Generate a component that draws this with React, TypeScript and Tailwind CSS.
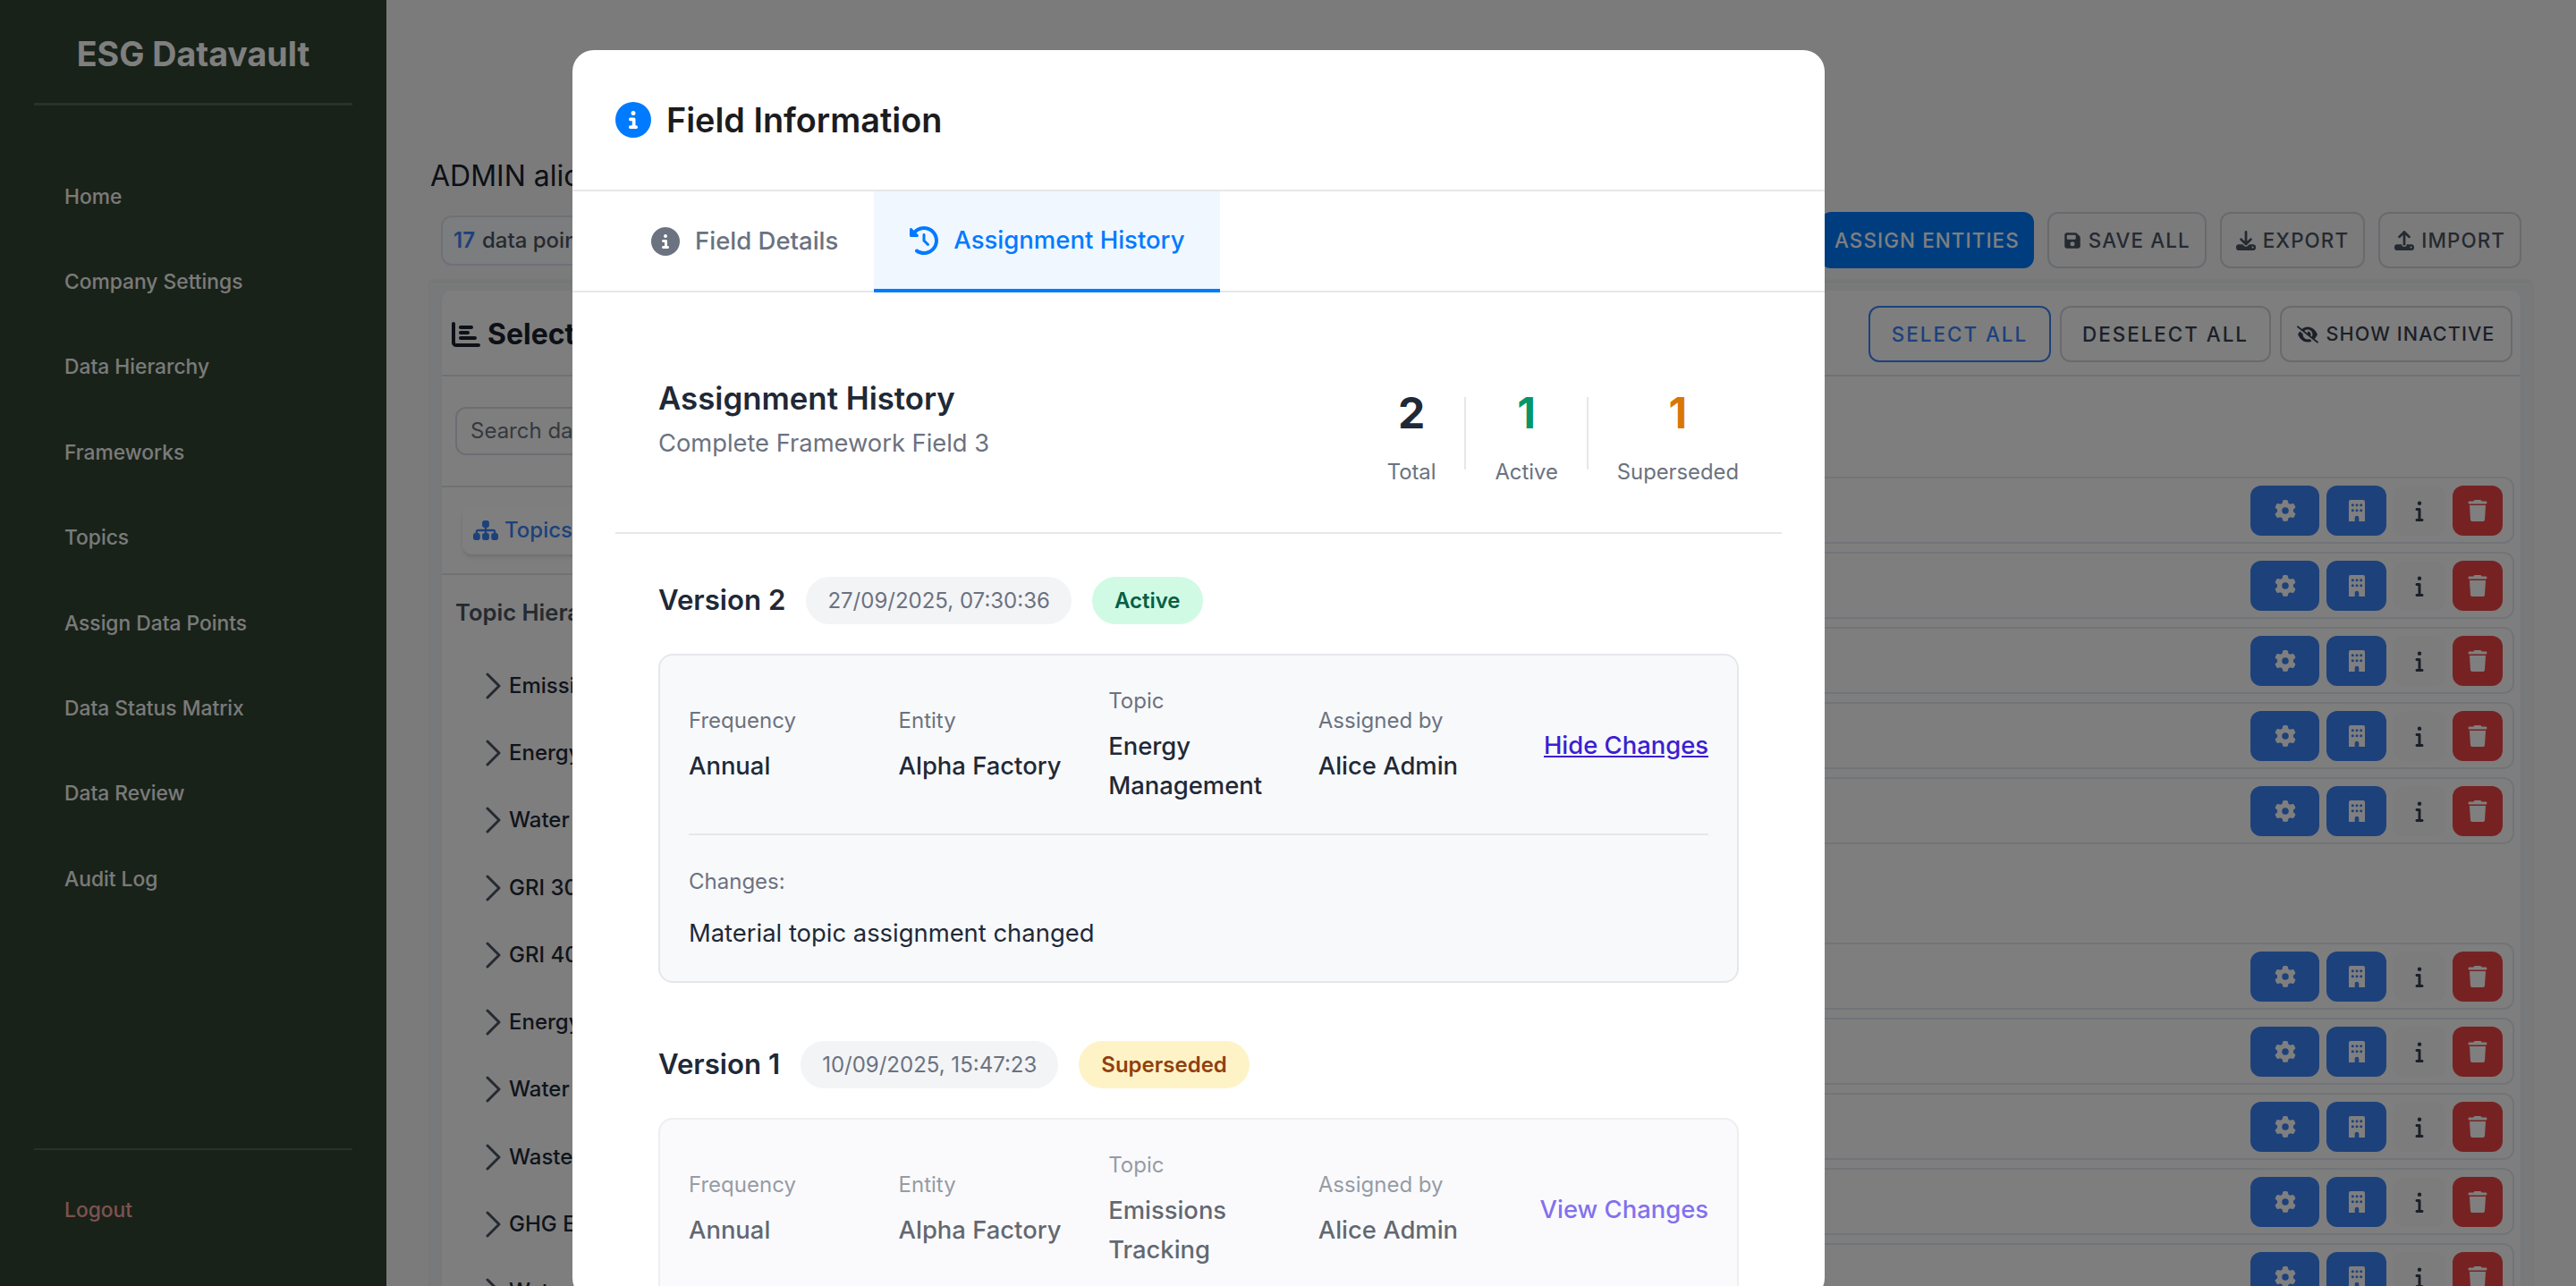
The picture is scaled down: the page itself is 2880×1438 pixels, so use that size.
import { FaChartBar, FaCircleInfo, FaClockRotateLeft, FaDownload, FaEyeSlash, FaFloppyDisk, FaGear, FaInfo, FaSitemap, FaTrash, FaUpload } from 'react-icons/fa6';

const navItems = ['Home', 'Company Settings', 'Data Hierarchy', 'Frameworks', 'Topics', 'Assign Data Points', 'Data Status Matrix', 'Data Review', 'Audit Log'];
const topics = ['Emissions Tracking', 'Energy Management', 'Water Management', 'GRI 300 Environmental', 'GRI 400 Social', 'Energy Management', 'Water Management', 'Waste Management', 'GHG Emissions', 'Water Management'];

function Sidebar() {
  return (
    <aside className="flex h-full w-[432px] shrink-0 flex-col bg-[#304431] px-[38px]">
      <div className="flex h-[118px] items-center justify-center border-b-[3px] border-[#4f6653] pt-[8px] text-[37.6px] font-bold text-white">ESG Datavault</div>
      <nav className="flex flex-1 flex-col pt-[54px]">
        {navItems.map(item => (
          <a key={item} className="flex h-[95.4px] items-center pl-[34px] text-[22.8px] font-medium text-[#f5f5f5]">{item}</a>
        ))}
      </nav>
      <div className="flex h-[154px] items-start border-t-2 border-[#4f6653] pl-[34px] pt-[50px] text-[22.8px] font-medium text-[#f8a5a0]">Logout</div>
    </aside>
  );
}

function ToolButton({ icon, label }: { icon: React.ReactNode; label: string }) {
  return (
    <button className="flex h-[63px] items-center gap-[8px] rounded-[12px] border-2 border-[#d1d5db] px-[16px] text-[22.4px] font-medium tracking-[1.1px] text-[#4b5563]">
      {icon}
      {label}
    </button>
  );
}

function BuildingIcon() {
  return (
    <svg width="18" height="24" viewBox="0 0 18 24">
      <path fill="#ffffff" d="M2 0h14a2 2 0 0 1 2 2v22h-6.7v-4a2.3 2.3 0 0 0-4.6 0v4H0V2a2 2 0 0 1 2-2z" />
      {[4.3, 9, 13.7].map(x => [5.7, 11.7].map(y => (
        <circle key={`${x}-${y}`} cx={x} cy={y} r="1.5" fill="#3b82f6" />
      )))}
    </svg>
  );
}

function RowActions() {
  return (
    <div className="ml-auto flex items-center gap-[8px]">
      <button className="flex h-[56px] w-[77px] items-center justify-center rounded-[12px] bg-[#3b82f6] text-white"><FaGear className="size-[24px]" /></button>
      <button className="flex h-[56px] w-[67px] items-center justify-center rounded-[12px] bg-[#3b82f6] text-white"><BuildingIcon /></button>
      <button className="flex h-[56px] w-[58px] items-center justify-center rounded-[12px] bg-[#f8f9fa] text-[#374151]"><FaInfo className="size-[24px]" /></button>
      <button className="flex h-[56px] w-[56px] items-center justify-center rounded-[12px] bg-[#ef4444] text-white"><FaTrash className="size-[24px]" /></button>
    </div>
  );
}

function FieldRow() {
  return (
    <div className="flex h-[75px] items-center rounded-[12px] border-2 border-[#e2e8f0] pr-[11px]">
      <RowActions />
    </div>
  );
}

function MainPage() {
  return (
    <main className="min-w-0 flex-1 bg-[#f6f7f8] pl-[49px] pr-[49px] pt-[173px]">
      <div className="text-[32px] leading-[48px] text-[#1a202c]">ADMIN alice@alpha.com</div>
      <div className="mt-[16px] flex h-[63px] items-center justify-between pl-[12px] pr-[12px]">
        <div className="flex h-[56px] items-center rounded-[12px] border-2 border-[#dbe3ee] bg-[#f8fafc] px-[12px] text-[24px] font-medium text-[#4b5563]">
          <span className="mr-[8px] font-semibold text-[#3b82f6]">17</span> data points selected
        </div>
        <div className="flex items-center gap-[15px]">
          <button className="flex h-[63px] items-center rounded-[12px] bg-[#007aff] px-[16px] text-[22.4px] font-medium tracking-[1.1px] text-white">ASSIGN ENTITIES</button>
          <ToolButton icon={<FaFloppyDisk className="size-[20px]" />} label="SAVE ALL" />
          <ToolButton icon={<FaDownload className="size-[22px]" />} label="EXPORT" />
          <ToolButton icon={<FaUpload className="size-[22px]" />} label="IMPORT" />
        </div>
      </div>
      <div className="mt-[16px] bg-[#f1f2f4] px-[11px] pt-[9px] shadow-[0_-2px_4px_rgba(0,0,0,0.08)]">
        <div className="rounded-t-[12px] border-x-2 border-[#eef1f5] bg-[#fdfdfd]">
          <div className="flex h-[96px] items-center justify-between border-b-2 border-[#dfe3e9] pl-[11px] pr-[9px] pt-[3px]">
            <div className="flex items-center gap-[8px] text-[32px] font-bold text-[#1a202c]">
              <FaChartBar className="size-[32px]" />
              Select Data Points
            </div>
            <div className="flex items-center gap-[10px]">
              <button className="flex h-[63px] w-[204px] items-center justify-center rounded-[12px] border-2 border-[#3b82f6] text-[22.4px] font-medium tracking-[2px] text-[#3b82f6]">SELECT ALL</button>
              <button className="flex h-[63px] w-[236px] items-center justify-center rounded-[12px] border-2 border-[#d1d5db] text-[22.4px] font-medium tracking-[2px] text-[#374151]">DESELECT ALL</button>
              <button className="flex h-[63px] w-[260px] items-center justify-center gap-[8px] rounded-[12px] border-2 border-[#d1d5db] text-[21.6px] font-medium tracking-[1.1px] text-[#374151]"><FaEyeSlash className="size-[24px]" />SHOW INACTIVE</button>
            </div>
          </div>
          <div className="flex">
            <div className="w-[760px] shrink-0">
              <div className="border-b-2 border-[#dfe3e9] px-[15px] py-[34px]">
                <div className="flex h-[54px] items-center rounded-[12px] border-2 border-[#d8dde5] px-[15px] text-[24px] text-[#6b7280]">Search data points...</div>
              </div>
              <div className="border-b-2 border-[#dfe3e9] px-[23px] py-[21px]">
                <div className="flex h-[54px] w-fit items-center gap-[7px] rounded-[10px] bg-white px-[12px] text-[24px] font-medium text-[#3b82f6] shadow-md"><FaSitemap className="size-[28px]" />Topics</div>
              </div>
              <div className="pl-[15px] pt-[22px] text-[25.6px] font-semibold leading-[40px] text-[#4b5563]">Topic Hierarchy</div>
              <div className="pl-[49px] pt-[24px]">
                {topics.map((topic, i) => (
                  <div key={i} className="flex h-[75.3px] items-center gap-[8px] text-[24px] font-medium text-[#1f2937]">
                    <svg width="18" height="30" viewBox="0 0 18 30" fill="none" stroke="#4b5563" strokeWidth="3" strokeLinecap="round" strokeLinejoin="round"><path d="M2 2 L15 15 L2 28" /></svg>
                    {topic}
                  </div>
                ))}
              </div>
            </div>
            <div className="min-w-0 flex-1 pr-[7px]">
              <div className="flex flex-col gap-[9px] pt-[112px]">
                {[0, 1, 2, 3, 4].map(i => <FieldRow key={i} />)}
              </div>
              <div className="mt-[110px] flex flex-col gap-[9px]">
                {[0, 1, 2, 3, 4].map(i => <FieldRow key={i} />)}
              </div>
            </div>
          </div>
        </div>
      </div>
    </main>
  );
}

function Stat({ value, label, color }: { value: string; label: string; color: string }) {
  return (
    <div className="flex flex-col items-center px-[32px] last:pr-0">
      <div className={`text-[48px] font-bold leading-[48px] ${color}`}>{value}</div>
      <div className="mt-[28px] text-[23.8px] leading-[28px] text-[#6b7280]">{label}</div>
    </div>
  );
}

function Detail({ label, value }: { label: string; value: string }) {
  return (
    <div className="w-[234.6px]">
      <div className="pt-[2px] text-[24px] leading-[34px] text-[#6b7280]">{label}</div>
      <div className="mt-[11px] max-w-[190px] text-[27.4px] font-medium leading-[44px] text-[#1f2937]">{value}</div>
    </div>
  );
}

function VersionCard({ version, date, badge, badgeClass, topic, link, linkClass, changes, dim }: {
  version: string;
  date: string;
  badge: string;
  badgeClass: string;
  topic: string;
  link: string;
  linkClass: string;
  changes?: string;
  dim?: boolean;
}) {
  return (
    <div className="mb-[65px]">
      <div className="flex items-center gap-[23px]">
        <div className="text-[31.2px] font-semibold text-[#1f2937]">{version}</div>
        <div className="flex h-[53px] items-center rounded-full bg-[#f3f4f6] px-[24px] text-[24px] text-[#6b7280]">{date}</div>
        <div className={`flex h-[53px] items-center rounded-full px-[25px] text-[24px] font-semibold ${badgeClass}`}>{badge}</div>
      </div>
      <div className={`mt-[33px] rounded-[16px] border-2 border-[#e5e7eb] bg-[#f8f9fb] p-[32px] ${dim ? 'opacity-70' : ''}`}>
        <div className="flex items-center">
          <Detail label="Frequency" value="Annual" />
          <Detail label="Entity" value="Alpha Factory" />
          <Detail label="Topic" value={topic} />
          <Detail label="Assigned by" value="Alice Admin" />
          <a className={`ml-auto whitespace-nowrap pt-[2px] text-[27.4px] font-medium ${linkClass}`}>{link}</a>
        </div>
        {changes && (
          <div className="mt-[32px] border-t-2 border-[#e5e7eb] pt-[35px]">
            <div className="text-[24px] leading-[34px] text-[#6b7280]">Changes:</div>
            <div className="mt-[18px] text-[27.4px] leading-[44px] text-[#1f2937]">{changes}</div>
          </div>
        )}
      </div>
    </div>
  );
}

function FieldModal() {
  return (
    <div className="fixed inset-0 overflow-hidden bg-black/50 backdrop-blur-[0.5px]">
      <div className="ml-[640px] mt-[56px] w-[1400px] rounded-[24px] bg-white">
        <div className="flex h-[158px] items-center gap-[17px] border-b-2 border-[#e5e7eb] px-[48px]">
          <FaCircleInfo className="size-[40px] text-[#007aff]" />
          <div className="text-[37.8px] font-semibold text-[#1c1c1e]">Field Information</div>
        </div>
        <div className="flex h-[113px] border-b-2 border-[#e5e7eb] pl-[48px]">
          <div className="flex items-center gap-[17px] px-[40px] text-[27.5px] font-medium text-[#6b7280]">
            <FaCircleInfo className="size-[32px]" />
            Field Details
          </div>
          <div className="-mb-[2px] flex items-center gap-[17px] border-b-4 border-[#007aff] bg-[#f0f7ff] px-[40px] text-[27.5px] font-medium text-[#007aff]">
            <FaClockRotateLeft className="size-[32px]" />
            Assignment History
          </div>
        </div>
        <div className="px-[48px] pt-[48px]">
          <div className="flex items-start justify-between border-b-2 border-[#e5e7eb] px-[48px] pb-[53px] pt-[48px]">
            <div>
              <div className="text-[34.8px] font-semibold leading-[44px] text-[#1f2937]">Assignment History</div>
              <div className="mt-[8px] text-[27.3px] leading-[42px] text-[#6b7280]">Complete Framework Field 3</div>
            </div>
            <div className="mt-[15px] flex items-start">
              <Stat value="2" label="Total" color="text-[#1f2937]" />
              <div className="mt-[6px] h-[81px] w-[2px] bg-[#e5e7eb]" />
              <Stat value="1" label="Active" color="text-[#059669]" />
              <div className="mt-[6px] h-[81px] w-[2px] bg-[#e5e7eb]" />
              <Stat value="1" label="Superseded" color="text-[#d97706]" />
            </div>
          </div>
          <div className="px-[48px] pt-[48px]">
            <VersionCard
              version="Version 2"
              date="27/09/2025, 07:30:36"
              badge="Active"
              badgeClass="bg-[#d1fae5] text-[#065f46]"
              topic="Energy Management"
              link="Hide Changes"
              linkClass="text-[#3b1fd1] underline"
              changes="Material topic assignment changed"
            />
            <VersionCard
              version="Version 1"
              date="10/09/2025, 15:47:23"
              badge="Superseded"
              badgeClass="bg-[#fef3c7] text-[#92400e]"
              topic="Emissions Tracking"
              link="View Changes"
              linkClass="text-[#4f35e8]"
              dim
            />
          </div>
        </div>
      </div>
    </div>
  );
}

export default function App() {
  return (
    <div className="flex h-screen overflow-hidden font-[family-name:Inter,sans-serif]">
      <Sidebar />
      <MainPage />
      <FieldModal />
    </div>
  );
}
